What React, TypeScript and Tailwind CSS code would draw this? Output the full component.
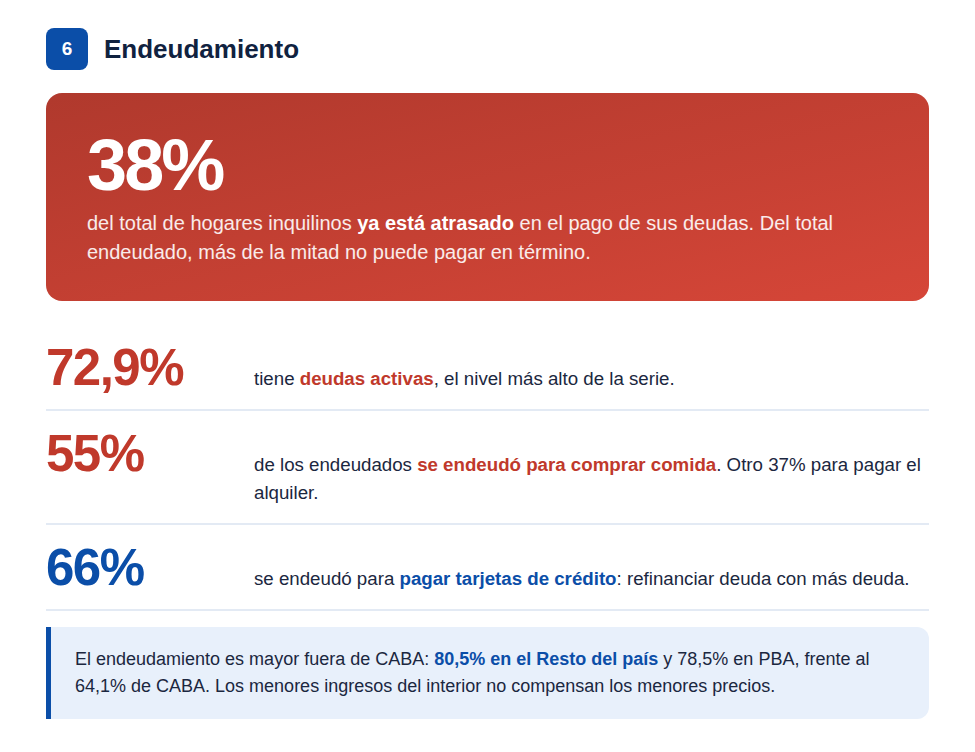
import React from "react";

const font = { fontFamily: '"Liberation Sans", Arial, sans-serif' };

function Row({
  num,
  color,
  children,
}: {
  num: string;
  color: string;
  children: React.ReactNode;
}) {
  return (
    <div className="flex items-baseline border-b-2 border-[#e3eaf4] pt-[17px] pb-4">
      <div className={`w-[208px] shrink-0 text-[51px] font-bold leading-none tracking-[-0.03em] ${color}`}>
        {num}
      </div>
      <p className="flex-1 text-[18.7px] leading-[28px] text-[#1b2740]">{children}</p>
    </div>
  );
}

export default function App() {
  return (
    <div className="min-h-[752px] bg-white" style={font}>
      <div className="mx-[46px] pt-7">
        <div className="flex items-center gap-4">
          <div className="flex h-[42px] w-[42px] items-center justify-center rounded-lg bg-[#0b4ea8] text-[19px] font-bold text-white">
            6
          </div>
          <h2 className="text-[26px] font-bold leading-none text-[#10223f]">Endeudamiento</h2>
        </div>

        <div className="mt-[23px] rounded-2xl bg-gradient-to-br from-[#b0392d] to-[#d64638] px-[41px] pt-9 pb-[34px] text-white">
          <div className="text-[72px] font-bold leading-none tracking-[-0.04em]">38%</div>
          <p className="mt-2 text-[20px] leading-[1.45] text-white/90">
            del total de hogares inquilinos <strong className="font-bold text-white">ya está atrasado</strong> en el pago de sus deudas. Del total endeudado, más de la mitad no puede pagar en término.
          </p>
        </div>

        <div className="mt-6">
          <Row num="72,9%" color="text-[#c0392b]">
            tiene <strong className="font-bold text-[#c0392b]">deudas activas</strong>, el nivel más alto de la serie.
          </Row>
          <Row num="55%" color="text-[#c0392b]">
            de los endeudados <strong className="font-bold text-[#c0392b]">se endeudó para comprar comida</strong>. Otro 37% para pagar el alquiler.
          </Row>
          <Row num="66%" color="text-[#0b4ea8]">
            se endeudó para <strong className="font-bold text-[#0b4ea8]">pagar tarjetas de crédito</strong>: refinanciar deuda con más deuda.
          </Row>
        </div>

        <div className="mt-4 rounded-r-xl border-l-[5px] border-[#0b4ea8] bg-[#e8f0fb] py-[19px] pl-6 pr-6">
          <p className="text-[18px] leading-[1.5] text-[#1b2740]">
            El endeudamiento es mayor fuera de CABA: <strong className="font-bold text-[#0b4ea8]">80,5% en el Resto del país</strong> y 78,5% en PBA, frente al 64,1% de CABA. Los menores ingresos del interior no compensan los menores precios.
          </p>
        </div>
      </div>
    </div>
  );
}
